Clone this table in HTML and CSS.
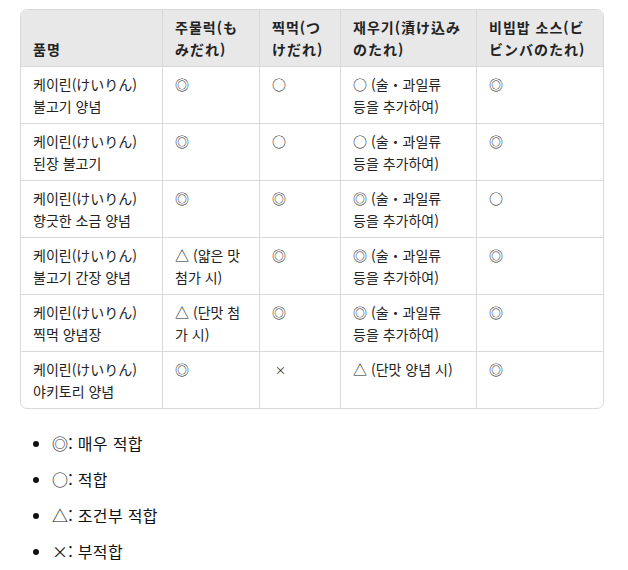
FILE: index.html
```html
<!DOCTYPE html>
<html lang="ko">
<head>
<meta charset="utf-8">
<link rel="stylesheet" href="styles.css">
</head>
<body>
<div class="page">
  <div class="table-wrap">
    <table class="grid">
      <colgroup>
        <col class="c1"><col class="c2"><col class="c3"><col class="c4"><col class="c5">
      </colgroup>
      <thead>
        <tr>
          <th>품명</th>
          <th>주물럭(もみだれ)</th>
          <th>찍먹(つけだれ)</th>
          <th>재우기(漬け込みのたれ)</th>
          <th>비빔밥 소스(ビビンバのたれ)</th>
        </tr>
      </thead>
      <tbody>
        <tr>
          <td>케이린(けいりん) 불고기 양념</td>
          <td>◎</td>
          <td>○</td>
          <td>○ (술・과일류 등을 추가하여)</td>
          <td>◎</td>
        </tr>
        <tr>
          <td>케이린(けいりん) 된장 불고기</td>
          <td>◎</td>
          <td>○</td>
          <td>○ (술・과일류 등을 추가하여)</td>
          <td>◎</td>
        </tr>
        <tr>
          <td>케이린(けいりん) 향긋한 소금 양념</td>
          <td>◎</td>
          <td>◎</td>
          <td>◎ (술・과일류 등을 추가하여)</td>
          <td>○</td>
        </tr>
        <tr>
          <td>케이린(けいりん) 불고기 간장 양념</td>
          <td>△ (얇은 맛 첨가 시)</td>
          <td>◎</td>
          <td>◎ (술・과일류 등을 추가하여)</td>
          <td>◎</td>
        </tr>
        <tr>
          <td>케이린(けいりん) 찍먹 양념장</td>
          <td>△ (단맛 첨가 시)</td>
          <td>◎</td>
          <td>◎ (술・과일류 등을 추가하여)</td>
          <td>◎</td>
        </tr>
        <tr>
          <td>케이린(けいりん) 야키토리 양념</td>
          <td>◎</td>
          <td><span class="cross">×</span></td>
          <td>△ (단맛 양념 시)</td>
          <td>◎</td>
        </tr>
      </tbody>
    </table>
  </div>
  <ul class="legend">
    <li>◎: 매우 적합</li>
    <li>○: 적합</li>
    <li>△: 조건부 적합</li>
    <li>×: 부적합</li>
  </ul>
</div>
</body>
</html>
```
FILE: styles.css
```css
html, body {
  margin: 0;
  padding: 0;
  background: #ffffff;
}
body {
  font-family: "Noto Sans CJK KR", "Noto Sans", sans-serif;
  color: #222222;
}
.page {
  padding: 9px 24px 0 20px;
}
.table-wrap {
  border: 1px solid #d9d9d9;
  border-radius: 7px;
  overflow: hidden;
  width: 582px;
}
.grid {
  border-collapse: separate;
  border-spacing: 0;
  table-layout: fixed;
  width: 582px;
  font-size: 14px;
  line-height: 22px;
}
.c1 { width: 142px; }
.c2 { width: 97px; }
.c3 { width: 81px; }
.c4 { width: 136px; }
.c5 { width: 126px; }
.grid th,
.grid td {
  padding: 6px 12px;
  text-align: left;
  border-right: 1px solid #d9d9d9;
  border-bottom: 1px solid #d9d9d9;
  vertical-align: top;
  word-break: break-all;
}
.grid th {
  background: #e8e8e8;
  font-weight: 700;
  vertical-align: bottom;
  height: 44px;
  letter-spacing: 1px;
}
.grid td:nth-child(4) {
  padding-right: 20px;
}
.grid th:last-child,
.grid td:last-child {
  border-right: none;
}
.grid tbody tr:last-child td {
  border-bottom: none;
}
.cross {
  font-size: 11px;
  padding-left: 3px;
}
.legend {
  margin: 22px 0 0 0;
  padding: 0 0 0 32px;
  font-size: 16px;
  line-height: 24px;
  color: #111111;
  letter-spacing: 0.3px;
}
.legend li {
  margin-bottom: 12px;
}
```
